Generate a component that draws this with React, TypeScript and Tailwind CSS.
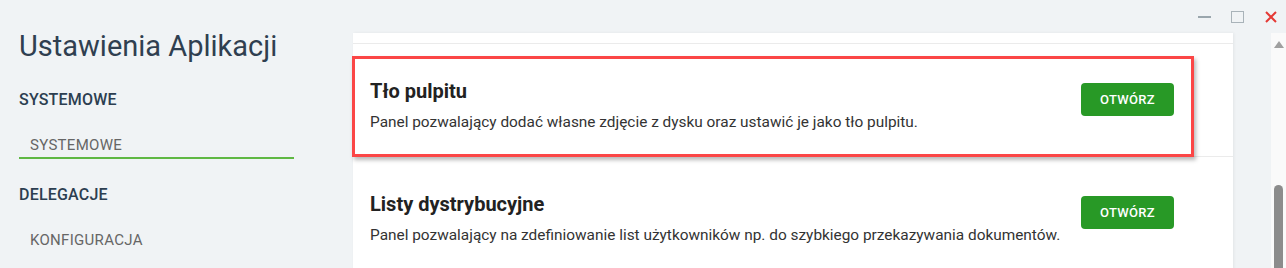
export default function App() {
  const items = [
    {
      title: "Tło pulpitu",
      desc: "Panel pozwalający dodać własne zdjęcie z dysku oraz ustawić je jako tło pulpitu.",
    },
    {
      title: "Listy dystrybucyjne",
      desc: "Panel pozwalający na zdefiniowanie list użytkowników np. do szybkiego przekazywania dokumentów.",
    },
  ];

  return (
    <div
      className="w-[1286px] h-[268px] bg-[#f0f3f5] overflow-hidden flex"
      style={{ fontFamily: "Roboto, 'Liberation Sans', sans-serif" }}
    >
      {/* sidebar */}
      <aside className="w-[353px] shrink-0 pl-[19px] pt-[29px]">
        <h1 className="text-[29px] leading-[34px] text-[#2f3f50]">Ustawienia Aplikacji</h1>
        <div className="mt-[27px] text-[16px] leading-[20px] font-medium text-[#2c3e50] tracking-[0.2px]">SYSTEMOWE</div>
        <div className="mt-[25px] w-[275px] pl-[11px] pb-[2px] border-b-2 border-[#5fb843] text-[15px] leading-[20px] text-[#666] tracking-[0.3px]">
          SYSTEMOWE
        </div>
        <div className="mt-[26px] text-[16px] leading-[20px] font-medium text-[#2c3e50] tracking-[0.2px]">DELEGACJE</div>
        <div className="mt-[25px] pl-[11px] text-[15px] leading-[20px] text-[#666] tracking-[0.3px]">KONFIGURACJA</div>
      </aside>

      {/* content */}
      <div className="flex-1 flex flex-col">
        <div className="h-[33px] shrink-0 flex items-center justify-end gap-[20px] pr-[8px]">
          <div className="w-[13px] h-[14px] flex items-center">
            <div className="w-[13px] h-[2px] bg-[#9aa6ad]" />
          </div>
          <div className="w-[13px] h-[12px] border-[1.5px] border-[#a9b3b9]" />
          <svg width="14" height="14" viewBox="0 0 14 14">
            <path d="M2 2L12 12M12 2L2 12" stroke="#e53935" strokeWidth="2" />
          </svg>
        </div>
        <div className="flex-1 flex">
          <div className="relative w-[880px] bg-white shadow-[1px_0_3px_rgba(0,0,0,0.06)]">
            <div className="h-[11px] border-b border-[#ebebeb]" />
            {items.map((it) => (
              <div
                key={it.title}
                className="flex items-start pl-[17px] pr-[59px] pt-[34px] pb-[24px] border-b border-[#ebebeb]"
              >
                <div className="flex-1">
                  <div className="text-[20px] leading-[26px] font-bold text-[#222]">{it.title}</div>
                  <div className="mt-[8px] text-[15.4px] leading-[20px] text-[#333]">{it.desc}</div>
                </div>
                <button className="mt-[5px] w-[93px] h-[33px] rounded-[4px] bg-[#289926] text-white text-[13px] font-medium tracking-[0.3px]">
                  OTWÓRZ
                </button>
              </div>
            ))}
            <div className="absolute left-[-1px] top-[23px] w-[842px] h-[101px] border-[3px] border-[#fb4646] shadow-[2px_3px_4px_rgba(0,0,0,0.28)]" />
          </div>
          <div className="w-[38px]" />
          <div className="w-[15px] bg-[#fafafa] flex flex-col items-center">
            <svg className="mt-[8px]" width="10" height="7" viewBox="0 0 10 7">
              <path d="M5 0L10 7H0Z" fill="#a0a0a0" />
            </svg>
            <div className="mt-[137px] w-[9px] flex-1 bg-[#8c8c8c] rounded-t-[5px]" />
          </div>
        </div>
      </div>
    </div>
  );
}
